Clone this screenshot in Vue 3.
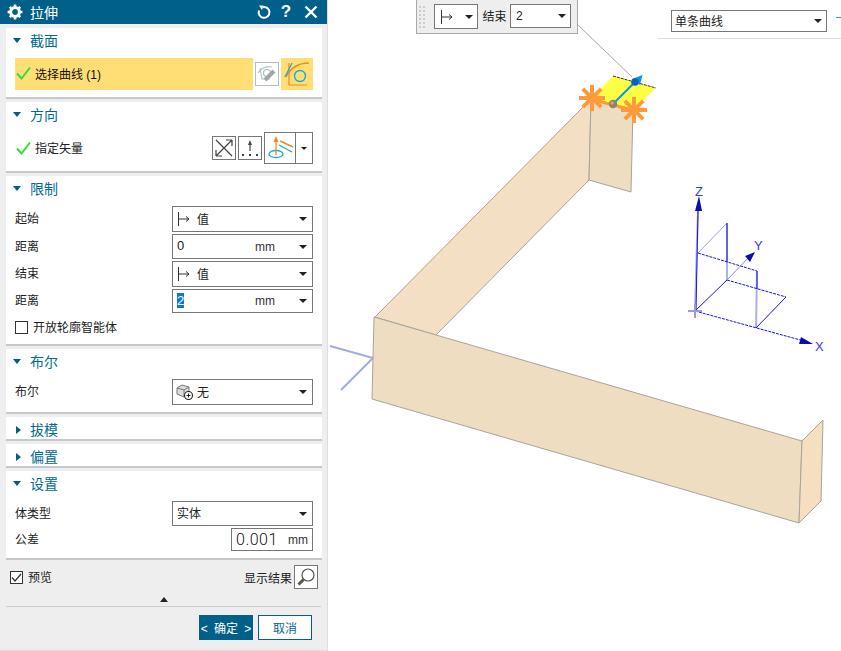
<script setup>
// 草图任务栏的对话框 + 右侧的模型视图
const starArms = [0, 45, 90, 135]
const stars = [
  { x: 592, y: 98 },
  { x: 634, y: 110 },
]
</script>

<template>
  <div class="screen">
    <!-- 左侧对话框 -->
    <aside class="panel">
      <header class="title-bar">
        <svg class="gear" width="16" height="16" viewBox="0 0 16 16">
          <circle cx="8" cy="8" r="4.4" fill="none" stroke="#fff" stroke-width="3" />
          <g stroke="#fff" stroke-width="2.6">
            <path d="M8 .6V3.4M8 12.6v2.8M.6 8H3.4M12.6 8h2.8M2.8 2.8l2 2M11.2 11.2l2 2M2.8 13.2l2-2M11.2 4.800l2-2" />
          </g>
        </svg>
        <span class="title">拉伸</span>
        <svg class="bar-icon" width="16" height="16" viewBox="0 0 16 16" fill="none" stroke="#fff" stroke-width="2">
          <path d="M6.500 3.200A5.400 5.400 0 1 1 3 6.500" />
          <path d="M3 1.500 7.500 1.500 6 6z" fill="#fff" stroke="none" />
        </svg>
        <span class="help">?</span>
        <svg class="bar-icon close" width="14" height="14" viewBox="0 0 14 14" stroke="#fff" stroke-width="2.400">
          <path d="M1.500 1.500 12.500 12.500M12.500 1.500 1.500 12.500" />
        </svg>
      </header>

      <section class="group sec-curve">
        <div class="group-head"><i class="tri-down"></i>截面</div>
        <div class="pick-row">
          <div class="pick-label">
            <svg class="check" width="15" height="14" viewBox="0 0 15 14" fill="none" stroke="#2fdc45" stroke-width="2">
              <path d="M1 7.500 5.500 12.500 14 1.500" />
            </svg>
            选择曲线 (1)
          </div>
          <button class="tool tool-off">
            <svg width="20" height="20" viewBox="0 0 20 20" fill="none">
              <path d="M1 9C5 3 10 2 15 3" stroke="#b5c4c8" stroke-width="1.200" />
              <path d="M3 4 5 15H13" stroke="#b5c4c8" stroke-width="1.200" />
              <circle cx="10" cy="9" r="3.500" stroke="#a8bcc2" stroke-width="1.200" />
              <path d="M8 16 17 7" stroke="#a5a5a5" stroke-width="4" />
            </svg>
          </button>
          <button class="tool-on">
            <svg width="32" height="32" viewBox="0 0 32 32" fill="none">
              <path d="M8 5V27H26" stroke="#ee8a22" stroke-width="1.200" />
              <path d="M5 19C10 9 18 5 28 5" stroke="#ee8a22" stroke-width="1.400" />
              <path d="M4 19 11 5" stroke="#1ca9d6" stroke-width="1.200" />
              <circle cx="19" cy="18" r="5.500" stroke="#1ca9d6" stroke-width="1.400" />
            </svg>
          </button>
        </div>
      </section>

      <section class="group sec-dir">
        <div class="group-head"><i class="tri-down"></i>方向</div>
        <div class="vector-row">
          <svg class="check" width="15" height="14" viewBox="0 0 15 14" fill="none" stroke="#2fdc45" stroke-width="2">
            <path d="M1 7.500 5.500 12.500 14 1.500" />
          </svg>
          <span class="vector-label">指定矢量</span>
          <button class="tool tool-dark">
            <svg width="22" height="22" viewBox="0 0 22 22" fill="none" stroke="#444" stroke-width="1.200">
              <path d="M3 3 19 19M19 3 3 19M19 3H13M19 3V9M3 19H9M3 19V13" />
            </svg>
          </button>
          <button class="tool tool-dark">
            <svg width="22" height="22" viewBox="0 0 22 22">
              <path d="M11 6V14" stroke="#444" stroke-width="1.200" />
              <path d="M11 3 13 8H9z" fill="#444" />
              <path d="M3 17h2v2H3zM10 17h2v2h-2zM17 17h2v2h-2z" fill="#444" />
            </svg>
          </button>
          <div class="split">
            <div class="split-main">
              <svg width="30" height="30" viewBox="0 0 30 30" fill="none">
                <ellipse cx="11" cy="21" rx="7" ry="3.500" stroke="#1ca9d6" stroke-width="1.300" />
                <path d="M11 7V22" stroke="#ee8a22" stroke-width="1.300" />
                <path d="M11 3 13.500 9H8.500z" fill="#ee8a22" />
                <path d="M15 8 28 14" stroke="#ee8a22" stroke-width="1.500" />
                <path d="M14 12 27 19" stroke="#1ca9d6" stroke-width="1.300" />
              </svg>
            </div>
            <div class="split-arrow"><i class="caret small"></i></div>
          </div>
        </div>
      </section>

      <section class="group sec-limit">
        <div class="group-head"><i class="tri-down"></i>限制</div>
        <div class="form">
          <label class="h26">起始</label>
          <div class="field h26">
            <svg class="limit-icon" width="14" height="14" viewBox="0 0 14 14" fill="none" stroke="#333">
              <path d="M1.500 0V14M1.500 7H12M9 4.500 12 7 9 9.500" />
            </svg>
            <span class="val">值</span><i class="caret"></i>
          </div>
          <label class="h25">距离</label>
          <div class="field h25">
            <span class="num">0</span><span class="unit">mm</span><i class="caret"></i>
          </div>
          <label class="h26">结束</label>
          <div class="field h26">
            <svg class="limit-icon" width="14" height="14" viewBox="0 0 14 14" fill="none" stroke="#333">
              <path d="M1.500 0V14M1.500 7H12M9 4.500 12 7 9 9.500" />
            </svg>
            <span class="val">值</span><i class="caret"></i>
          </div>
          <label class="h24">距离</label>
          <div class="field h24">
            <span class="num selected">2</span><span class="unit">mm</span><i class="caret"></i>
          </div>
        </div>
        <div class="check-row">
          <i class="box"></i>
          <span class="val">开放轮廓智能体</span>
        </div>
      </section>

      <section class="group sec-bool">
        <div class="group-head"><i class="tri-down"></i>布尔</div>
        <div class="form">
          <label class="h26">布尔</label>
          <div class="field h26">
            <svg class="bool-icon" width="18" height="18" viewBox="0 0 18 18">
              <path d="M1 5 6 2 13 4V11L8 14 1 11z" fill="#ddd" stroke="#777" />
              <path d="M1 5 8 7 13 4M8 7V14" fill="none" stroke="#777" />
              <circle cx="12.500" cy="12.500" r="4" fill="#fff" stroke="#222" stroke-width="1.100" />
              <path d="M10.500 12.500h4M12.500 10.500v4" stroke="#222" />
            </svg>
            <span class="val">无</span><i class="caret"></i>
          </div>
        </div>
      </section>

      <section class="group sec-closed">
        <div class="group-head"><i class="tri-right"></i>拔模</div>
      </section>
      <section class="group sec-closed">
        <div class="group-head"><i class="tri-right"></i>偏置</div>
      </section>

      <section class="group sec-settings">
        <div class="group-head"><i class="tri-down"></i>设置</div>
        <div class="form">
          <label class="h25">体类型</label>
          <div class="field h25">
            <span class="val">实体</span><i class="caret"></i>
          </div>
        </div>
        <div class="tol-row">
          <label class="val">公差</label>
          <div class="tol-field">
            <span class="tol-num">0.001</span><span class="unit">mm</span>
          </div>
        </div>
      </section>

      <div class="preview-row">
        <i class="box checked">
          <svg width="11" height="11" viewBox="0 0 11 11" fill="none" stroke="#333" stroke-width="1.200">
            <path d="M1 5.500 4 9 10 2" />
          </svg>
        </i>
        <span class="preview-text val">预览</span>
        <span class="result-text">显示结果</span>
        <button class="tool tool-dark">
          <svg width="20" height="20" viewBox="0 0 20 20" fill="none" stroke="#555" stroke-width="1.200">
            <circle cx="12" cy="8" r="6" />
            <path d="M7.500 12.500 2.500 17.500" stroke-width="3" />
          </svg>
        </button>
      </div>
      <div class="more"><i class="tri-up"></i></div>
      <div class="actions">
        <button class="btn-ok">&lt; 确定 &gt;</button>
        <button class="btn-cancel">取消</button>
      </div>
    </aside>

    <!-- 模型视图 -->
    <main class="view">
      <svg class="model" width="513" height="651" viewBox="328 0 513 651">
        <path d="M330 346 373 358 341 390" fill="none" stroke="#a3abe2" stroke-width="2" />

        <g stroke="#a8a49c" stroke-width="1" stroke-linejoin="round">
          <path d="M375 317 591 99 589 180 436 335z" fill="#f3dfc3" />
          <path d="M591 99 633 109 631 192 589 180z" fill="#eeddc0" />
          <path d="M374 317 802 441 799 523 372 399z" fill="#eeddc0" />
          <path d="M802 441 823 420 821 501 799 523z" fill="#f5dfc0" />
        </g>

        <path d="M578 25 632 77" stroke="#aca99a" stroke-width="1" />
        <path d="M613 76 656 88 633 110 591 99z" fill="#ffff44" />
        <path d="M613 76 656 88" stroke="#333" stroke-width="1" stroke-dasharray="3 1" />
        <path d="M591 99 613 105 633 110" stroke="#ff9a3c" stroke-width="3" />

        <g v-for="star in stars" :key="star.x" :transform="`translate(${star.x} ${star.y})`">
          <path
            v-for="arm in starArms"
            :key="arm"
            d="M-13 0H13"
            stroke="#ff9a3c"
            stroke-width="4"
            :transform="`rotate(${arm})`"
          />
        </g>

        <path d="M613 104 636 81" stroke="#0a92ea" stroke-width="2" />
        <path d="M642.500 75 640 85 632 79z" fill="#0a92ea" />
        <circle cx="635" cy="82" r="3.800" fill="#0a62b8" />
        <circle cx="613" cy="104" r="4.200" fill="#8f8468" />
        <circle cx="612" cy="103" r="1.800" fill="#b9ad8c" />

        <!-- 坐标系 -->
        <g fill="none" stroke-width="1">
          <path d="M695 311 698 210" stroke="#aab0f0" stroke-width="2" />
          <path d="M696 311 698 210" stroke="#1414e6" />
          <path d="M698 253 727 223" stroke="#9aa0ee" />
          <path d="M727 223 727 280" stroke="#aab0f0" stroke-width="2" />
          <path d="M727 223 727 262" stroke="#1414e6" />
          <path d="M757 271 756 328" stroke="#aab0f0" stroke-width="2" />
          <path d="M757 271 757 289" stroke="#1414e6" />
          <path d="M698 253 757 271" stroke="#1414e6" stroke-dasharray="3 1" />
          <path d="M727 280 786 297" stroke="#1414e6" stroke-dasharray="3 1" />
          <path d="M786 297 756 328" stroke="#1414e6" />
          <path d="M695 311 804 341" stroke="#1414e6" stroke-dasharray="3 1" />
          <path d="M695 311 727 280" stroke="#1414e6" />
          <path d="M727 280 750 256" stroke="#8088e8" />
          <path d="M688 311H702M695 304V318" stroke="#9a9ade" stroke-width="2" />
        </g>
        <path d="M699 196 702 211H695z" fill="#0c0cb4" />
        <path d="M755 252 750 262 745 256z" fill="#0c0cb4" />
        <path d="M813 344 799 344 801 337z" fill="#0c0cb4" />
        <text x="695" y="196" class="axis">Z</text>
        <text x="754" y="250" class="axis">Y</text>
        <text x="815" y="351" class="axis">X</text>
      </svg>

      <div class="float-bar">
        <div class="grip">
          <i v-for="n in 12" :key="n"></i>
        </div>
        <div class="mini-select first">
          <svg width="14" height="16" viewBox="0 0 14 16" fill="none" stroke="#333">
            <path d="M1.500 1V15M1.500 8H12M9 5.500 12 8 9 10.500" />
          </svg>
          <i class="caret"></i>
        </div>
        <span class="float-label">结束</span>
        <div class="mini-select second">
          <span>2</span><i class="caret"></i>
        </div>
      </div>

      <div class="filter-bar">
        <div class="filter-select">
          <span class="val">单条曲线</span><i class="caret"></i>
        </div>
        <i class="filter-tick"></i>
      </div>
    </main>
  </div>
</template>

<style>
html,
body {
  margin: 0;
  overflow: hidden;
  background: #fff;
}
</style>

<style scoped>
.screen {
  display: flex;
  width: 841px;
  height: 651px;
  font-family: "Liberation Sans", "Noto Sans CJK SC", sans-serif;
  font-size: 12px;
  color: #222;
}

.panel {
  box-sizing: border-box;
  width: 328px;
  height: 651px;
  flex: none;
  background: #eee;
  border-right: 1px solid #ddd;
  border-bottom: 1px solid #ddd;
}

.title-bar {
  display: flex;
  align-items: center;
  height: 24px;
  padding: 0 9px 0 7px;
  background: #00608a;
  color: #fff;
}
.gear {
  margin-right: 7px;
}
.title {
  font-size: 14px;
  flex: 1;
}
.help {
  width: 20px;
  margin-left: 4px;
  text-align: center;
  font-size: 17px;
  font-weight: bold;
}
.close {
  margin-left: 8px;
}

.group {
  box-sizing: border-box;
  width: 316px;
  margin: 3px 0 0 6px;
  padding: 0 9px;
  background: #fff;
  border-bottom: 2px solid #c8c8c8;
}
.group-head {
  display: flex;
  align-items: center;
  box-sizing: border-box;
  height: 25px;
  padding-bottom: 2px;
  font-size: 14px;
  color: #006a8f;
}
.tri-down {
  width: 0;
  height: 0;
  margin: 2px 9px 0 -2px;
  border-left: 4.5px solid transparent;
  border-right: 4.5px solid transparent;
  border-top: 5px solid #005f7f;
}
.tri-right {
  width: 0;
  height: 0;
  margin: 2px 9px 0 1px;
  border-top: 4.5px solid transparent;
  border-bottom: 4.5px solid transparent;
  border-left: 5px solid #005f7f;
}
.tri-up {
  width: 0;
  height: 0;
  border-left: 4.5px solid transparent;
  border-right: 4.5px solid transparent;
  border-bottom: 5px solid #222;
}
.caret {
  width: 0;
  height: 0;
  margin-left: auto;
  border-left: 4px solid transparent;
  border-right: 4px solid transparent;
  border-top: 4.500px solid #222;
}
.caret.small {
  margin: 0;
  border-left-width: 3px;
  border-right-width: 3px;
  border-top-width: 3.500px;
}
.val {
  margin-bottom: 2px;
}

button {
  padding: 0;
  font-family: inherit;
  cursor: pointer;
}

.sec-curve {
  height: 71px;
  margin-top: 4px;
}
.pick-row {
  display: flex;
  height: 32px;
  margin-top: 5px;
}
.pick-label {
  display: flex;
  align-items: center;
  box-sizing: border-box;
  width: 238px;
  padding-bottom: 2px;
  background: #ffdf75;
  color: #111;
}
.check {
  flex: none;
  margin: 0 4px 0 1px;
}
.tool {
  display: flex;
  align-items: center;
  justify-content: center;
  box-sizing: border-box;
  width: 24px;
  height: 24px;
  background: #fff;
  flex: none;
}
.tool-off {
  margin: 4px 2px 0 2px;
  border: 1px solid #bbb;
}
.tool-dark {
  border: 1px solid #777;
}
.tool-on {
  display: block;
  width: 32px;
  height: 32px;
  border: 0;
  background: #ffdf75;
}

.sec-dir {
  height: 71px;
}
.vector-row {
  display: flex;
  align-items: center;
  gap: 2px;
  height: 32px;
  margin-top: 5px;
}
.vector-row .check {
  margin-right: 2px;
}
.vector-label {
  margin-right: auto;
  margin-bottom: 2px;
}
.split {
  display: flex;
  box-sizing: border-box;
  width: 49px;
  height: 32px;
  border: 1px solid #777;
}
.split-main {
  width: 30px;
  border-right: 1px solid #777;
}
.split-arrow {
  flex: 1;
  display: flex;
  align-items: center;
  justify-content: center;
}

.form {
  display: grid;
  grid-template-columns: 157px 141px;
  row-gap: 2px;
  margin-top: 5px;
}
.form label {
  display: flex;
  align-items: center;
  box-sizing: border-box;
  padding-bottom: 3px;
}
.h26 {
  height: 26px;
}
.h25 {
  height: 25px;
}
.h24 {
  height: 24px;
}
.field {
  display: flex;
  align-items: center;
  box-sizing: border-box;
  padding: 0 5px 0 4px;
  border: 1px solid #777;
  background: #fff;
}
.limit-icon {
  margin-right: 6px;
}
.bool-icon {
  margin: 0 3px 0 -1px;
}
.num {
  width: 78px;
  font-size: 13px;
  line-height: 15px;
  margin-top: -2px;
}
.num.selected::first-letter {
  background: #0a78d7;
  color: #fff;
}
.unit {
  color: #333;
  font-size: 12px;
}

.sec-limit {
  height: 170px;
}
.check-row {
  display: flex;
  align-items: center;
  gap: 5px;
  height: 16px;
  margin-top: 6px;
}
.box {
  display: flex;
  align-items: center;
  justify-content: center;
  box-sizing: border-box;
  width: 13px;
  height: 13px;
  background: #fff;
  border: 1px solid #333;
  flex: none;
}

.sec-bool {
  height: 65px;
}
.sec-closed {
  height: 24px;
}
.sec-closed .group-head {
  height: 24px;
  padding-bottom: 0;
}
.sec-settings {
  height: 89px;
}
.tol-row {
  display: flex;
  align-items: center;
  justify-content: space-between;
  height: 23px;
  margin-top: 2px;
}
.tol-field {
  display: flex;
  align-items: center;
  box-sizing: border-box;
  width: 82px;
  height: 23px;
  padding-left: 4px;
  border: 1px solid #777;
}
.tol-num {
  width: 52px;
  font-family: Roboto, "Liberation Sans", sans-serif;
  font-size: 16px;
  font-weight: 300;
  letter-spacing: 0.5px;
  color: #111;
}

.preview-row {
  display: flex;
  align-items: center;
  height: 24px;
  margin: 5px 9px 0 10px;
}
.preview-text {
  margin-left: 5px;
  margin-right: auto;
}
.result-text {
  margin-right: 2px;
}
.more {
  display: flex;
  justify-content: center;
  align-items: center;
  box-sizing: border-box;
  height: 18px;
  margin: 0 6px;
  padding-top: 3px;
  border-bottom: 1px solid #ccc;
}
.actions {
  display: flex;
  justify-content: flex-end;
  gap: 5px;
  margin: 8px 15px 0 0;
}
.btn-ok,
.btn-cancel {
  width: 54px;
  height: 25px;
  font-size: 12px;
  border: 1px solid #00608a;
}
.btn-ok {
  background: #00608a;
  color: #fff;
  word-spacing: 3px;
}
.btn-cancel {
  background: #fff;
  color: #006a8f;
}

.view {
  position: relative;
  flex: 1;
  height: 651px;
  background: #fff;
}
.model {
  position: absolute;
  left: 0;
  top: 0;
}
.axis {
  font-size: 13px;
  fill: #3a3ae8;
}

.float-bar {
  position: absolute;
  left: 88px;
  top: 0;
  box-sizing: border-box;
  display: flex;
  align-items: center;
  width: 162px;
  height: 34px;
  padding-left: 2px;
  background: #eee;
  border: 1px solid #aaa;
  border-top: 0;
}
.grip {
  display: grid;
  grid-template-columns: 2px 2px;
  gap: 2px;
  margin-right: 9px;
}
.grip i {
  width: 2px;
  height: 2px;
  background: #ccc;
}
.mini-select {
  display: flex;
  align-items: center;
  box-sizing: border-box;
  padding: 0 4px 0 5px;
  background: #fff;
  border: 1px solid #777;
}
.mini-select.first {
  width: 44px;
  height: 25px;
}
.mini-select.second {
  width: 61px;
  height: 24px;
  margin-top: -2px;
}
.float-label {
  width: 31px;
  padding-left: 1px;
  margin-bottom: 2px;
  text-align: center;
}

.filter-bar {
  position: absolute;
  left: 330px;
  top: 0;
  box-sizing: border-box;
  display: flex;
  align-items: center;
  width: 183px;
  height: 39px;
  padding: 4px 0 0 13px;
  background: #fff;
  border-bottom: 1px solid #ddd;
}
.filter-select {
  display: flex;
  align-items: center;
  box-sizing: border-box;
  width: 156px;
  height: 22px;
  padding: 0 4px 0 3px;
  border: 1px solid #777;
}
.filter-tick {
  width: 5px;
  height: 1px;
  margin: -7px 0 0 9px;
  background: #0fb0dc;
}
</style>
